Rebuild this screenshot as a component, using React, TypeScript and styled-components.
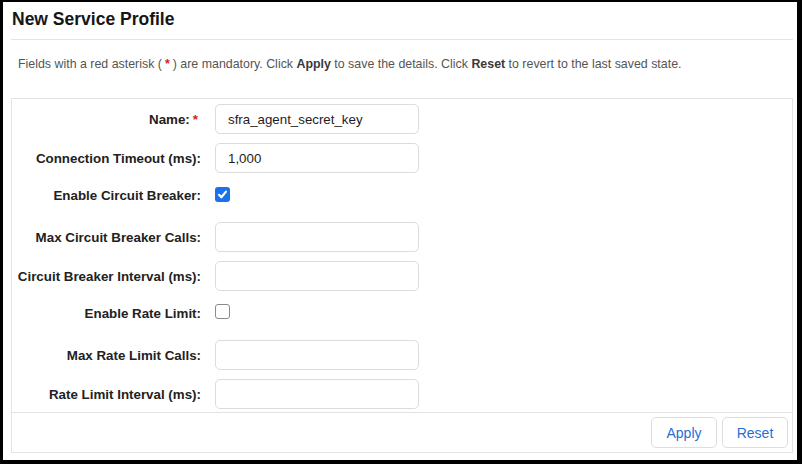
import React, { useState } from "react";
import styled, { createGlobalStyle } from "styled-components";

const GlobalStyle = createGlobalStyle`
  html, body {
    margin: 0;
    padding: 0;
    background: #000;
  }
  body {
    font-family: "Liberation Sans", Arial, Helvetica, sans-serif;
    color: #1d1d1d;
  }
`;

const Frame = styled.div`
  box-sizing: border-box;
  width: 802px;
  height: 464px;
  border-style: solid;
  border-color: #000;
  border-width: 2px 5px 4px 3px;
  background: #fff;
  padding: 0 4px 0 8px;
  display: flex;
  flex-direction: column;
  overflow: hidden;
`;

const Header = styled.div`
  padding: 6px 0 9px 1px;
  border-bottom: 1px solid #e4e4e4;
`;

const Title = styled.h1`
  margin: 0;
  font-size: 17.5px;
  line-height: 22px;
  font-weight: 700;
  color: #161616;
`;

const Intro = styled.p`
  margin: 16px 0 0 7px;
  font-size: 12.4px;
  line-height: 16px;
  color: #555;

  b {
    color: #3a3a3a;
  }
`;

const Req = styled.span<{ $gap?: number }>`
  color: #e0201a;
  font-weight: 700;
  margin: 0 ${(p) => p.$gap ?? 0}px;
`;

const Panel = styled.div`
  margin-top: 26px;
  border: 1px solid #e3e3e3;
  display: flex;
  flex-direction: column;
`;

const FormBody = styled.div`
  padding: 5px 0 3px 0;
  display: flex;
  flex-direction: column;
  gap: 9px;
`;

const Row = styled.div<{ $check?: boolean }>`
  display: grid;
  grid-template-columns: 189px 204px;
  column-gap: 14px;
  align-items: center;
  height: ${(p) => (p.$check ? "26px" : "30px")};
  padding-bottom: ${(p) => (p.$check ? "5px" : "0")};
`;

const Label = styled.label`
  text-align: right;
  font-size: 13.35px;
  font-weight: 700;
  color: #222;
  white-space: nowrap;
`;

const TextInput = styled.input`
  box-sizing: border-box;
  width: 204px;
  height: 30px;
  border: 1px solid #dcdcdc;
  border-radius: 5px;
  padding: 0 12px;
  font-family: inherit;
  font-size: 13.3px;
  color: #1d1d1d;
  outline: none;
`;

const CheckBox = styled.span<{ $on: boolean }>`
  box-sizing: border-box;
  width: 15px;
  height: 15px;
  border-radius: 3px;
  display: inline-flex;
  align-items: center;
  justify-content: center;
  cursor: pointer;
  background: ${(p) => (p.$on ? "#1a72ea" : "#fff")};
  border: ${(p) => (p.$on ? "none" : "1px solid #8a8a8a")};
`;

const Footer = styled.div`
  border-top: 1px solid #e3e3e3;
  padding: 4px 4px 4px 0;
  display: flex;
  justify-content: flex-end;
  gap: 5px;
`;

const Button = styled.button`
  width: 66px;
  height: 31px;
  background: #fff;
  border: 1px solid #dedede;
  border-radius: 5px;
  color: #1f6fd8;
  font-family: inherit;
  font-size: 14px;
  cursor: pointer;
`;

type Field = { label: string; kind: "text" | "check"; required?: boolean; value?: string | boolean };

const fields: Field[] = [
  { label: "Name:", kind: "text", required: true, value: "sfra_agent_secret_key" },
  { label: "Connection Timeout (ms):", kind: "text", value: "1,000" },
  { label: "Enable Circuit Breaker:", kind: "check", value: true },
  { label: "Max Circuit Breaker Calls:", kind: "text", value: "" },
  { label: "Circuit Breaker Interval (ms):", kind: "text", value: "" },
  { label: "Enable Rate Limit:", kind: "check", value: false },
  { label: "Max Rate Limit Calls:", kind: "text", value: "" },
  { label: "Rate Limit Interval (ms):", kind: "text", value: "" },
];

const Check: React.FC<{ on: boolean; onToggle: () => void }> = ({ on, onToggle }) => (
  <CheckBox $on={on} onClick={onToggle} role="checkbox" aria-checked={on}>
    {on && (
      <svg width="11" height="11" viewBox="0 0 11 11">
        <path d="M2 5.8 L4.4 8.3 L9 2.6" fill="none" stroke="#fff" strokeWidth="2.2" strokeLinecap="round" strokeLinejoin="round" />
      </svg>
    )}
  </CheckBox>
);

const App: React.FC = () => {
  const [values, setValues] = useState(fields.map((f) => f.value));

  const update = (i: number, v: string | boolean) => {
    setValues((prev) => prev.map((p, j) => (j === i ? v : p)));
  };

  return (
    <>
      <GlobalStyle />
      <Frame>
        <Header>
          <Title>New Service Profile</Title>
        </Header>
        <Intro>
          Fields with a red asterisk (<Req $gap={3}>*</Req>) are mandatory. Click <b>Apply</b> to save the details. Click{" "}
          <b>Reset</b> to revert to the last saved state.
        </Intro>
        <Panel>
          <FormBody>
            {fields.map((f, i) => (
              <Row key={f.label} $check={f.kind === "check"}>
                <Label>
                  {f.label}
                  {f.required && <Req $gap={3}>*</Req>}
                </Label>
                {f.kind === "text" ? (
                  <TextInput value={values[i] as string} onChange={(e) => update(i, e.target.value)} />
                ) : (
                  <div>
                    <Check on={values[i] as boolean} onToggle={() => update(i, !values[i])} />
                  </div>
                )}
              </Row>
            ))}
          </FormBody>
          <Footer>
            <Button>Apply</Button>
            <Button>Reset</Button>
          </Footer>
        </Panel>
      </Frame>
    </>
  );
};

export default App;
